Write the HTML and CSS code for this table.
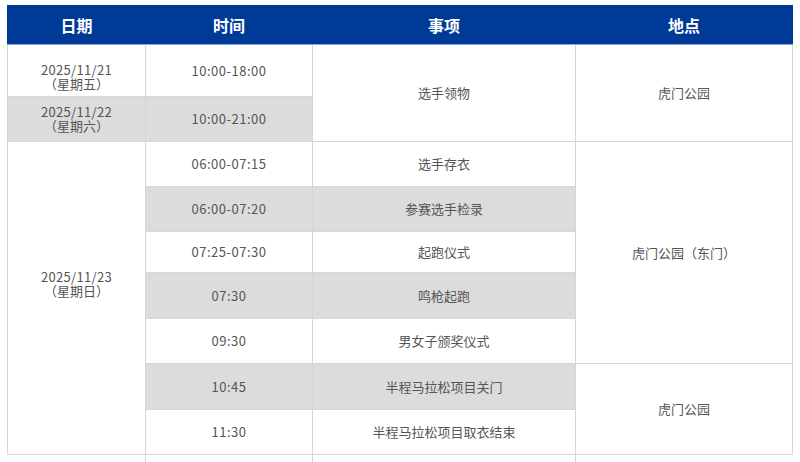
FILE: index.html
```html
<!DOCTYPE html>
<html lang="zh-CN">
<head>
<meta charset="utf-8">
<link rel="stylesheet" href="styles.css">
</head>
<body>
<table class="schedule">
  <colgroup>
    <col class="c-date">
    <col class="c-time">
    <col class="c-item">
    <col class="c-place">
  </colgroup>
  <thead>
    <tr class="head">
      <th>日期</th>
      <th>时间</th>
      <th>事项</th>
      <th>地点</th>
    </tr>
  </thead>
  <tbody>
    <tr class="r1">
      <td class="date"><span class="d">2025/11/21</span><br>（星期五）</td>
      <td class="num">10:00-18:00</td>
      <td rowspan="2">选手领物</td>
      <td rowspan="2">虎门公园</td>
    </tr>
    <tr class="r2">
      <td class="date gray"><span class="d">2025/11/22</span><br>（星期六）</td>
      <td class="num gray">10:00-21:00</td>
    </tr>
    <tr class="r3">
      <td class="date long" rowspan="7"><span class="d">2025/11/23</span><br>（星期日）</td>
      <td class="num">06:00-07:15</td>
      <td>选手存衣</td>
      <td rowspan="5">虎门公园（东门）</td>
    </tr>
    <tr class="r4">
      <td class="num gray">06:00-07:20</td>
      <td class="gray">参赛选手检录</td>
    </tr>
    <tr class="r5">
      <td class="num">07:25-07:30</td>
      <td>起跑仪式</td>
    </tr>
    <tr class="r6">
      <td class="num gray">07:30</td>
      <td class="gray">鸣枪起跑</td>
    </tr>
    <tr class="r7">
      <td class="num">09:30</td>
      <td>男女子颁奖仪式</td>
    </tr>
    <tr class="r8">
      <td class="num gray">10:45</td>
      <td class="gray">半程马拉松项目关门</td>
      <td rowspan="2">虎门公园</td>
    </tr>
    <tr class="r9">
      <td class="num">11:30</td>
      <td>半程马拉松项目取衣结束</td>
    </tr>
    <tr class="tail">
      <td></td>
      <td></td>
      <td></td>
      <td></td>
    </tr>
  </tbody>
</table>
</body>
</html>
```
FILE: styles.css
```css
html, body {
  margin: 0;
  padding: 0;
  background: #ffffff;
  overflow: hidden;
}
body {
  padding: 5px 0 0 7px;
  font-family: "Noto Sans CJK SC", "Noto Sans", sans-serif;
}
.schedule {
  border-collapse: collapse;
  table-layout: fixed;
  width: 785px;
}
.c-date { width: 138px; }
.c-time { width: 167px; }
.c-item { width: 263px; }
.c-place { width: 217px; }

.head th {
  height: 38px;
  padding: 0;
  background: #003a97;
  color: #ffffff;
  font-size: 16px;
  font-weight: 700;
  text-align: center;
  vertical-align: middle;
  border: 1px solid #003a97;
  border-bottom: 1px solid #8aa6dc;
  border-left: 1px solid #8aa6dc;
}
.head th:first-child {
  border-left: 1px solid #003a97;
}

.schedule td {
  padding: 0;
  border: 1px solid #d6d6d6;
  font-size: 13px;
  color: #555555;
  text-align: center;
  vertical-align: middle;
  line-height: 16px;
}
.schedule td.num {
  letter-spacing: 0.5px;
}
.schedule td.date {
  line-height: 14px;
}
.schedule td.date .d {
  letter-spacing: 0.3px;
}
.schedule td.gray {
  background: #dcdcdc;
}
.schedule td.long {
  padding-bottom: 28px;
}
.r1 { height: 52px; }
.r1 td.date { padding-top: 12px; }
.r2 { height: 45px; }
.r3 { height: 45px; }
.r4 { height: 45px; }
.r5 { height: 41px; }
.r6 { height: 46px; }
.r7 { height: 45px; }
.r8 { height: 46px; }
.r9 { height: 45px; }
.tail { height: 12px; }
.tail td {
  border: none;
}
.tail td + td {
  border-left: 1px solid #d6d6d6;
}
```
